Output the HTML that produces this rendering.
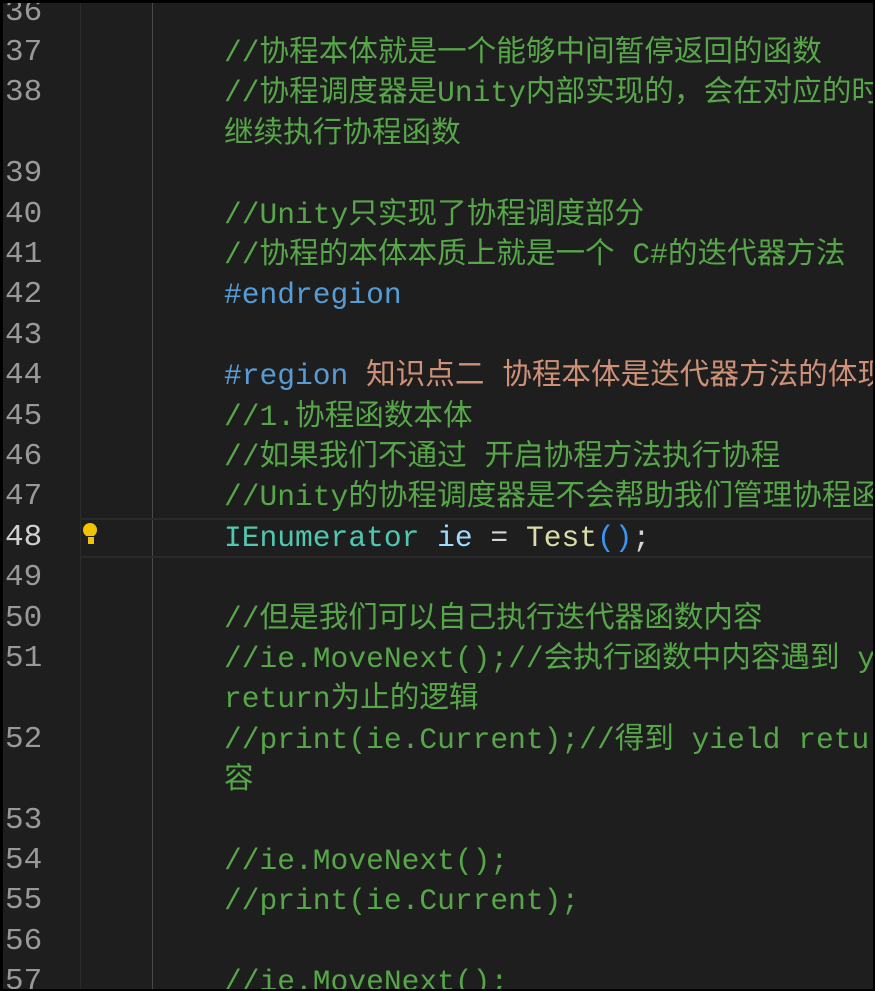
<!DOCTYPE html>
<html><head><meta charset="utf-8"><style>
html,body{margin:0;padding:0;background:#fff;}
#f{position:absolute;left:0;top:0;width:875px;height:991px;background:#000;}
#ed{position:absolute;left:3px;top:3px;width:870px;height:986px;background:#1e1e1e;overflow:hidden;}
.vl{position:absolute;top:0;bottom:0;width:1px;}
.row{position:absolute;left:0;right:0;height:40.4px;line-height:40.4px;font-family:"Liberation Mono","Noto Sans CJK SC",monospace;font-size:29.6px;white-space:pre;}
.n{position:absolute;left:2px;color:#999;font-size:31px;}
.c{position:absolute;left:221px;}
.g{color:#57a64a}.b{color:#569cd6}.o{color:#ce9178}
</style></head><body>
<div id="f"><div id="ed">
<div class="vl" style="left:77px;background:#2c2c2c"></div>
<div class="vl" style="left:149px;background:#4a4a4a"></div>
</div></div>
<div style="position:absolute;left:3px;top:3px;width:870px;height:986px;overflow:hidden;"><div style="position:absolute;left:0;top:5px;width:870px;height:1000px;">
<div class="row" style="top:-15.4px"><span class="n">36</span></div>
<div class="row" style="top:25px"><span class="n">37</span><span class="c g">//协程本体就是一个能够中间暂停返回的函数</span></div>
<div class="row" style="top:65.4px"><span class="n">38</span><span class="c g">//协程调度器是Unity内部实现的，会在对应的时机</span></div>
<div class="row" style="top:105.8px"><span class="c g">继续执行协程函数</span></div>
<div class="row" style="top:146.2px"><span class="n">39</span></div>
<div class="row" style="top:186.6px"><span class="n">40</span><span class="c g">//Unity只实现了协程调度部分</span></div>
<div class="row" style="top:227px"><span class="n">41</span><span class="c g">//协程的本体本质上就是一个 C#的迭代器方法</span></div>
<div class="row" style="top:267.4px"><span class="n">42</span><span class="c b">#endregion</span></div>
<div class="row" style="top:307.8px"><span class="n">43</span></div>
<div class="row" style="top:348.2px"><span class="n">44</span><span class="c"><span class="b">#region</span> <span class="o">知识点二 协程本体是迭代器方法的体现</span></span></div>
<div class="row" style="top:388.6px"><span class="n">45</span><span class="c g">//1.协程函数本体</span></div>
<div class="row" style="top:429px"><span class="n">46</span><span class="c g">//如果我们不通过 开启协程方法执行协程</span></div>
<div class="row" style="top:469.4px"><span class="n">47</span><span class="c g">//Unity的协程调度器是不会帮助我们管理协程函数的</span></div>
<div class="row" style="top:510px;left:77px;height:36px;border-top:2px solid #2a2a2a;border-bottom:2px solid #2a2a2a;"></div>
<div class="row" style="top:509.8px"><span class="n" style="color:#d0d0d0">48</span><span style="position:absolute;left:80px;top:5px;width:14px;height:14px;border-radius:7px;background:#f2c300"></span><span style="position:absolute;left:84px;top:18px;width:6px;height:7px;background:#f2c300;border:1px solid #1e1e1e"></span><span class="c"><span style="color:#4ec9b0">IEnumerator</span> <span style="color:#9cdcfe">ie</span> <span style="color:#d4d4d4">=</span> <span style="color:#dcdcaa">Test</span><span style="color:#3a96f5">()</span><span style="color:#d4d4d4">;</span></span></div>
<div class="row" style="top:550.2px"><span class="n">49</span></div>
<div class="row" style="top:590.6px"><span class="n">50</span><span class="c g">//但是我们可以自己执行迭代器函数内容</span></div>
<div class="row" style="top:631px"><span class="n">51</span><span class="c g">//ie.MoveNext();//会执行函数中内容遇到 yield</span></div>
<div class="row" style="top:671.4px"><span class="c g">return为止的逻辑</span></div>
<div class="row" style="top:711.8px"><span class="n">52</span><span class="c g">//print(ie.Current);//得到 yield return的内</span></div>
<div class="row" style="top:752.2px"><span class="c g">容</span></div>
<div class="row" style="top:792.6px"><span class="n">53</span></div>
<div class="row" style="top:833px"><span class="n">54</span><span class="c g">//ie.MoveNext();</span></div>
<div class="row" style="top:873.4px"><span class="n">55</span><span class="c g">//print(ie.Current);</span></div>
<div class="row" style="top:913.8px"><span class="n">56</span></div>
<div class="row" style="top:954.2px"><span class="n">57</span><span class="c g">//ie.MoveNext();</span></div>
</div></div>
</body></html>
